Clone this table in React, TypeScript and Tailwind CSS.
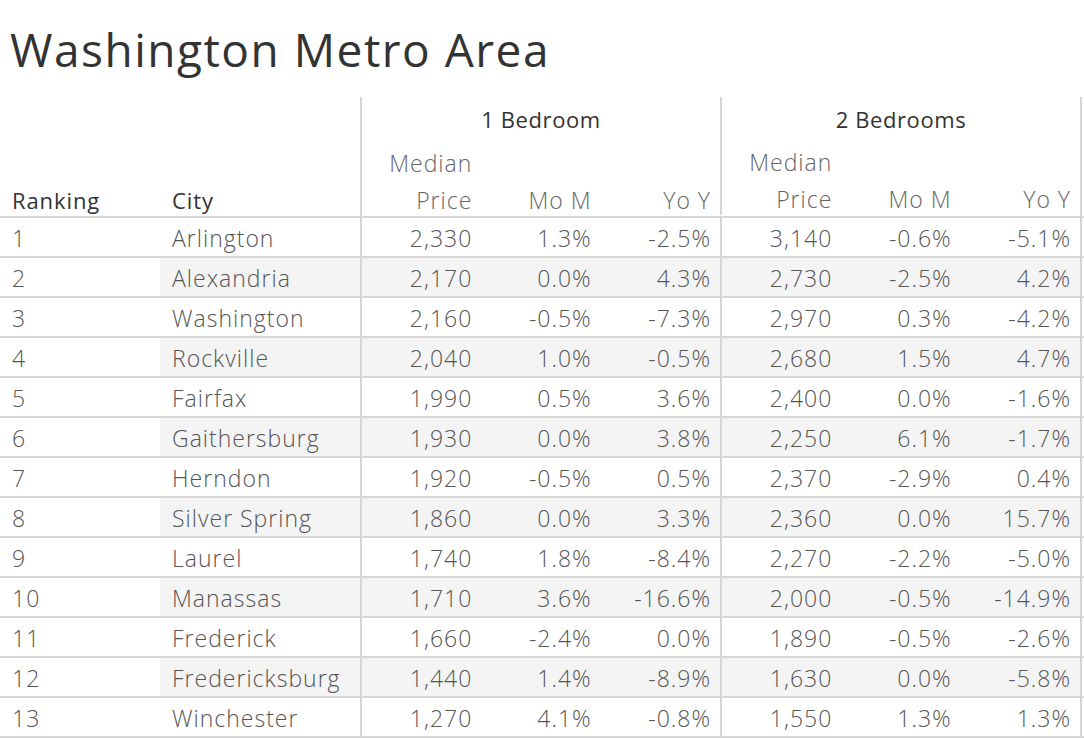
const rows = [
  ["1", "Arlington", "2,330", "1.3%", "-2.5%", "3,140", "-0.6%", "-5.1%"],
  ["2", "Alexandria", "2,170", "0.0%", "4.3%", "2,730", "-2.5%", "4.2%"],
  ["3", "Washington", "2,160", "-0.5%", "-7.3%", "2,970", "0.3%", "-4.2%"],
  ["4", "Rockville", "2,040", "1.0%", "-0.5%", "2,680", "1.5%", "4.7%"],
  ["5", "Fairfax", "1,990", "0.5%", "3.6%", "2,400", "0.0%", "-1.6%"],
  ["6", "Gaithersburg", "1,930", "0.0%", "3.8%", "2,250", "6.1%", "-1.7%"],
  ["7", "Herndon", "1,920", "-0.5%", "0.5%", "2,370", "-2.9%", "0.4%"],
  ["8", "Silver Spring", "1,860", "0.0%", "3.3%", "2,360", "0.0%", "15.7%"],
  ["9", "Laurel", "1,740", "1.8%", "-8.4%", "2,270", "-2.2%", "-5.0%"],
  ["10", "Manassas", "1,710", "3.6%", "-16.6%", "2,000", "-0.5%", "-14.9%"],
  ["11", "Frederick", "1,660", "-2.4%", "0.0%", "1,890", "-0.5%", "-2.6%"],
  ["12", "Fredericksburg", "1,440", "1.4%", "-8.9%", "1,630", "0.0%", "-5.8%"],
  ["13", "Winchester", "1,270", "4.1%", "-0.8%", "1,550", "1.3%", "1.3%"],
]

function GroupHeader({ title }: { title: string }) {
  return (
    <div className="flex flex-col border-l-2 border-[#d6d6d6]">
      <div className="h-[44px] flex items-center justify-center text-[22px] tracking-[0.6px] text-[#333]">{title}</div>
      <div className="grid grid-cols-3 flex-1 text-[23px] tracking-[1px] font-light text-[#666] leading-[37px]">
        <div className="flex flex-col items-end justify-end pr-[9px] translate-y-[3px]">
          <span>Median</span>
          <span>Price</span>
        </div>
        <div className="flex items-end justify-end pr-[9px] translate-y-[3px]">Mo M</div>
        <div className="flex items-end justify-end pr-[9px] translate-y-[3px]">Yo Y</div>
      </div>
    </div>
  )
}

export default function App() {
  return (
    <div className="w-[1084px] h-[740px] bg-white overflow-hidden font-['Open_Sans',sans-serif]">
      <h1 className="h-[97px] pl-[10px] pt-[19px] text-[46px] tracking-[1.5px] leading-[60px] text-[#333]">Washington Metro Area</h1>

      {/* Header */}
      <div className="grid grid-cols-[160px_200px_360px_362px] h-[121px] border-b-2 border-[#d6d6d6]">
        <div className="flex items-end pl-[12px] text-[22px] tracking-[0.9px] leading-[37px] text-[#333]">
          <span className="translate-y-[3px]">Ranking</span>
        </div>
        <div className="flex items-end pl-[12px] text-[22px] tracking-[0.9px] leading-[37px] text-[#333]">
          <span className="translate-y-[3px]">City</span>
        </div>
        <GroupHeader title="1 Bedroom" />
        <div className="border-r-2 border-[#d6d6d6] flex">
          <div className="flex-1">
            <GroupHeader title="2 Bedrooms" />
          </div>
        </div>
      </div>

      {/* Rows */}
      {rows.map((r, i) => (
        <div
          key={r[0]}
          className="grid grid-cols-[160px_200px_360px_362px] h-[40px] border-b-2 border-[#d6d6d6] text-[23px] tracking-[1px] font-light text-[#555]"
        >
          <div className="flex items-center pl-[12px] pt-[3px]">{r[0]}</div>
          <div className={`flex items-center pl-[12px] pt-[3px] ${i % 2 === 1 ? "bg-[#f4f4f4]" : ""}`}>{r[1]}</div>
          <div className={`grid grid-cols-3 border-l-2 border-[#d6d6d6] ${i % 2 === 1 ? "bg-[#f4f4f4]" : ""}`}>
            {r.slice(2, 5).map((v, j) => (
              <div key={j} className="flex items-center justify-end pr-[9px] pt-[3px]">{v}</div>
            ))}
          </div>
          <div className={`grid grid-cols-3 border-x-2 border-[#d6d6d6] ${i % 2 === 1 ? "bg-[#f4f4f4]" : ""}`}>
            {r.slice(5, 8).map((v, j) => (
              <div key={j} className="flex items-center justify-end pr-[9px] pt-[3px]">{v}</div>
            ))}
          </div>
        </div>
      ))}
    </div>
  )
}
